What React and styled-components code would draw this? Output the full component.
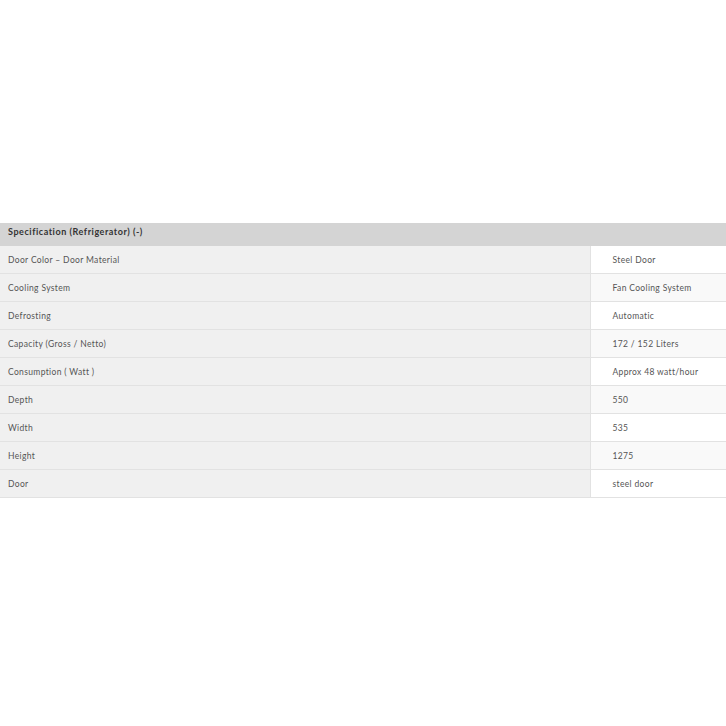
import React from "react";
import styled, { createGlobalStyle } from "styled-components";

const specs = [
  ["Door Color – Door Material", "Steel Door"],
  ["Cooling System", "Fan Cooling System"],
  ["Defrosting", "Automatic"],
  ["Capacity (Gross / Netto)", "172 / 152 Liters"],
  ["Consumption ( Watt )", "Approx 48 watt/hour"],
  ["Depth", "550"],
  ["Width", "535"],
  ["Height", "1275"],
  ["Door", "steel door"],
];

function App() {
  return (
    <>
      <GlobalStyle />
      <Page>
        <SpecTable>
          <thead>
            <tr>
              <HeadCell colSpan={2}>Specification (Refrigerator) (-)</HeadCell>
            </tr>
          </thead>
          <tbody>
            {specs.map(([label, value], i) => (
              <Row key={label}>
                <Label>{label}</Label>
                <Value $even={i % 2 === 1}>{value}</Value>
              </Row>
            ))}
          </tbody>
        </SpecTable>
      </Page>
    </>
  );
}

export default App;

const GlobalStyle = createGlobalStyle`
  body {
    margin: 0;
    background: #fff;
    font-family: Lato, "Open Sans", sans-serif;
  }
`;

const Page = styled.div`
  padding-top: 223px;
  width: 726px;
`;

const SpecTable = styled.table`
  width: 100%;
  border-collapse: collapse;
  font-size: 8.5px;
  letter-spacing: 0.35px;
`;

const HeadCell = styled.th`
  background: #d4d4d4;
  color: #333;
  font-size: 9px;
  font-weight: 700;
  letter-spacing: 0.55px;
  text-align: left;
  vertical-align: top;
  height: 23px;
  padding: 3px 8px 0;
  box-sizing: border-box;
`;

const Row = styled.tr`
  height: 27.9px;
  border-bottom: 1px solid #e2e2e2;
`;

const Label = styled.td`
  width: 590px;
  background: #f0f0f0;
  color: #555;
  padding: 1px 8px 0;
  border-right: 1px solid #e2e2e2;
  box-sizing: border-box;
`;

const Value = styled.td`
  background: ${(p) => (p.$even ? "#f9f9f9" : "#fff")};
  color: #555;
  padding: 1px 0 0 22px;
`;
